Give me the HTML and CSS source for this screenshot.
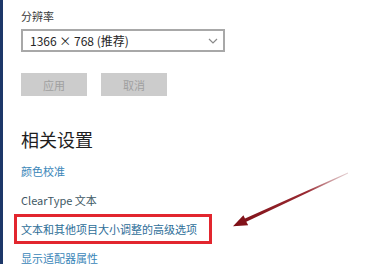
FILE: index.html
```html
<!DOCTYPE html>
<html lang="zh-CN">
<head>
<meta charset="utf-8">
<title>显示设置</title>
<link rel="stylesheet" href="styles.css">
</head>
<body>
<div class="page">
  <div class="label">分辨率</div>
  <div class="select">
    <span class="select-text">1366 × 768 (推荐)</span>
    <svg class="chev" width="10" height="6" viewBox="0 0 10 6"><path d="M1 1 L5 5 L9 1" fill="none" stroke="#8a8a8a" stroke-width="1.2"/></svg>
  </div>
  <div class="buttons">
    <div class="btn">应用</div>
    <div class="btn">取消</div>
  </div>
  <h2 class="heading">相关设置</h2>
  <div class="links">
    <div class="link blue">颜色校准</div>
    <div class="link slate">ClearType 文本</div>
    <div class="link mid highlight">文本和其他项目大小调整的高级选项</div>
    <div class="link blue">显示适配器属性</div>
  </div>
  <svg class="arrow" width="382" height="264" viewBox="0 0 382 264">
    <defs>
      <linearGradient id="g" x1="348" y1="173" x2="233" y2="226" gradientUnits="userSpaceOnUse">
        <stop offset="0" stop-color="#c9a0a4" stop-opacity="0.5"/>
        <stop offset="0.35" stop-color="#9a2a32"/>
        <stop offset="1" stop-color="#7e0f16"/>
      </linearGradient>
    </defs>
    <polygon points="348.1,173.4 246.3,221.8 248.2,225.2 233,226.2 243.4,215.2 245.0,218.6 347.9,172.6" fill="url(#g)"/>
  </svg>
</div>
</body>
</html>
```

FILE: styles.css
```css
html, body {
  margin: 0;
  padding: 0;
  background: #ffffff;
}
.page {
  position: relative;
  width: 382px;
  height: 264px;
  box-sizing: border-box;
  border-left: 3px solid #1d3768;
  padding-left: 18px;
  overflow: hidden;
  font-family: "Noto Sans CJK SC", "Noto Sans", sans-serif;
  color: #333333;
}
.label {
  margin-top: 8px;
  font-size: 11px;
  line-height: 16px;
  color: #3a3a3a;
}
.select {
  margin-top: 5px;
  width: 204px;
  height: 23px;
  box-sizing: border-box;
  border: 2px solid #a8a8a8;
  display: flex;
  align-items: center;
  justify-content: space-between;
  padding: 0 5px 0 7px;
}
.select-text {
  font-size: 12px;
  color: #262626;
  line-height: 16px;
}
.chev {
  display: block;
}
.buttons {
  margin-top: 21px;
  display: flex;
  gap: 14px;
}
.btn {
  width: 66px;
  height: 23px;
  background: #cccccc;
  color: #a0a0a0;
  font-size: 11px;
  display: flex;
  align-items: center;
  justify-content: center;
}
.heading {
  margin: 31px 0 0 0;
  font-size: 18px;
  line-height: 24px;
  font-weight: normal;
  color: #1e1e1e;
}
.links {
  margin-top: 12px;
  display: flex;
  flex-direction: column;
  gap: 13px;
}
.link {
  font-size: 11px;
  line-height: 16px;
}
.blue { color: #3a86b8; }
.slate { color: #3e5864; }
.mid { color: #2e6e98; }
.highlight {
  width: 198px;
  box-sizing: border-box;
  margin: -7px 0 -7px -7px;
  padding: 4px;
  border: 3px solid #e2262e;
}
.arrow {
  position: absolute;
  left: -3px;
  top: 0;
}
```
